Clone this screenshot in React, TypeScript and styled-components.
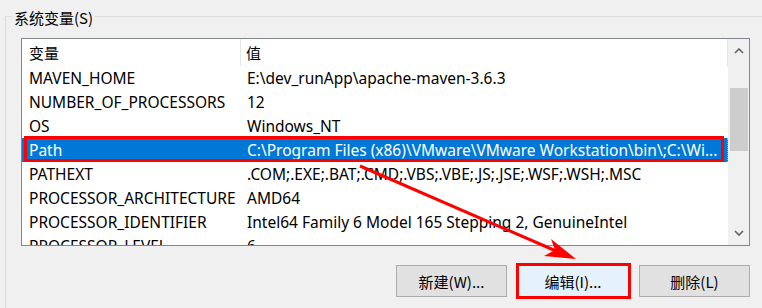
import React from "react";
import styled, { createGlobalStyle } from "styled-components";

const GlobalStyle = createGlobalStyle`
  html, body { margin: 0; padding: 0; background: #f0f0f0; }
  body {
    font-family: "Noto Sans", "Noto Sans CJK SC", sans-serif;
    font-size: 15px;
    color: #000;
  }
  * { box-sizing: border-box; }
`;

const Page = styled.div`
  position: relative;
  width: 762px;
  height: 308px;
  overflow: hidden;
  background: #f0f0f0;
`;

const GroupBox = styled.div`
  margin: 16px 0 0 5px;
  height: 292px;
  border-top: 1px solid #dcdcdc;
  border-left: 1px solid #dcdcdc;
`;

const GroupTitle = styled.div`
  width: fit-content;
  margin: -9px 0 0 6px;
  padding: 0 2px;
  line-height: 20px;
  background: #f0f0f0;
  font-family: "Noto Sans CJK SC", "Noto Sans", sans-serif;
`;

const Content = styled.div`
  padding-left: 15px;
  margin-top: 10px;
  width: 744px;
`;

const ListBox = styled.div`
  width: 729px;
  height: 208px;
  border: 1px solid #828790;
  background: #fff;
  display: flex;
`;

const ListArea = styled.div`
  flex: 1;
  overflow: hidden;
  display: flex;
  flex-direction: column;
`;

const HeaderRow = styled.div`
  display: grid;
  grid-template-columns: 219px 1fr;
  height: 27px;
  flex: none;
`;

const HeaderCell = styled.div<{ $pad: number }>`
  padding-left: ${(p) => p.$pad}px;
  line-height: 27px;
  border-right: 1px solid #e5e5e5;
  font-family: "Noto Sans CJK SC", "Noto Sans", sans-serif;
`;

const Row = styled.div<{ $selected?: boolean }>`
  position: relative;
  display: grid;
  grid-template-columns: 219px 1fr;
  height: 24px;
  flex: none;
  line-height: 24px;
  font-size: 15.5px;
  white-space: nowrap;
  background: ${(p) => (p.$selected ? "#0078d7" : "transparent")};
  color: ${(p) => (p.$selected ? "#fff" : "#000")};
  border-right: ${(p) => (p.$selected ? "1px dotted #f7a21c" : "none")};
`;

const Cell = styled.div<{ $pad: number }>`
  padding-left: ${(p) => p.$pad}px;
  overflow: hidden;
`;

const RedMark = styled.div`
  position: absolute;
  top: -2px;
  left: 2px;
  right: 3px;
  bottom: 0;
  border: 3px solid #ff0000;
  pointer-events: none;
`;

const ScrollBar = styled.div`
  width: 21px;
  flex: none;
  background: #f0f0f0;
  display: flex;
  flex-direction: column;
`;

const ScrollArrow = styled.div`
  height: 24px;
  flex: none;
  display: flex;
  align-items: center;
  justify-content: center;
`;

const Track = styled.div`
  flex: 1;
`;

const Thumb = styled.div<{ $top: number; $height: number }>`
  margin: ${(p) => p.$top}px 1px 0 2px;
  height: ${(p) => p.$height}px;
  background: #cdcdcd;
`;

const ButtonRow = styled.div`
  display: flex;
  justify-content: flex-end;
  gap: 10.5px;
  width: 729px;
  margin-top: 19px;
`;

const Button = styled.button<{ $focused?: boolean }>`
  width: 111px;
  height: 32px;
  padding: 0;
  border: 1px solid ${(p) => (p.$focused ? "#0078d7" : "#adadad")};
  background: ${(p) => (p.$focused ? "#e5f1fb" : "#e1e1e1")};
  font-family: "Noto Sans CJK SC", "Noto Sans", sans-serif;
  font-size: 15px;
  color: #000;
  outline: ${(p) => (p.$focused ? "3px solid #ff0000" : "none")};
  outline-offset: -1px;
`;

const ArrowOverlay = styled.svg`
  position: absolute;
  left: 0;
  top: 0;
  pointer-events: none;
`;

const Chevron = ({ up }: { up?: boolean }) => (
  <svg width="10" height="6" viewBox="0 0 10 6">
    <path
      d={up ? "M1 5 L5 1 L9 5" : "M1 1 L5 5 L9 1"}
      fill="none"
      stroke="#606060"
      strokeWidth="1.6"
    />
  </svg>
);

const rows: { name: string; value: string; selected?: boolean }[] = [
  { name: "MAVEN_HOME", value: "E:\\dev_runApp\\apache-maven-3.6.3" },
  { name: "NUMBER_OF_PROCESSORS", value: "12" },
  { name: "OS", value: "Windows_NT" },
  {
    name: "Path",
    value: "C:\\Program Files (x86)\\VMware\\VMware Workstation\\bin\\;C:\\Wi...",
    selected: true,
  },
  { name: "PATHEXT", value: ".COM;.EXE;.BAT;.CMD;.VBS;.VBE;.JS;.JSE;.WSF;.WSH;.MSC" },
  { name: "PROCESSOR_ARCHITECTURE", value: "AMD64" },
  { name: "PROCESSOR_IDENTIFIER", value: "Intel64 Family 6 Model 165 Stepping 2, GenuineIntel" },
  { name: "PROCESSOR_LEVEL", value: "6" },
];

export default function App() {
  return (
    <Page>
      <GlobalStyle />
      <GroupBox>
        <GroupTitle>系统变量(S)</GroupTitle>
        <Content>
          <ListBox>
            <ListArea>
              <HeaderRow>
                <HeaderCell $pad={7}>变量</HeaderCell>
                <HeaderCell $pad={5}>值</HeaderCell>
              </HeaderRow>
              {rows.map((r) => (
                <Row key={r.name} $selected={r.selected}>
                  <Cell $pad={7}>{r.name}</Cell>
                  <Cell $pad={6}>{r.value}</Cell>
                  {r.selected && <RedMark />}
                </Row>
              ))}
            </ListArea>
            <ScrollBar>
              <ScrollArrow>
                <Chevron up />
              </ScrollArrow>
              <Track>
                <Thumb $top={25} $height={63} />
              </Track>
              <ScrollArrow>
                <Chevron />
              </ScrollArrow>
            </ScrollBar>
          </ListBox>
          <ButtonRow>
            <Button>新建(W)...</Button>
            <Button $focused>编辑(I)...</Button>
            <Button>删除(L)</Button>
          </ButtonRow>
        </Content>
      </GroupBox>
      <ArrowOverlay width="762" height="308" viewBox="0 0 762 308">
        <line x1="360" y1="166" x2="556" y2="251" stroke="#ff0000" strokeWidth="3" />
        <polygon points="576,259 551,239 555,250 544,256" fill="#ff0000" />
      </ArrowOverlay>
    </Page>
  );
}
